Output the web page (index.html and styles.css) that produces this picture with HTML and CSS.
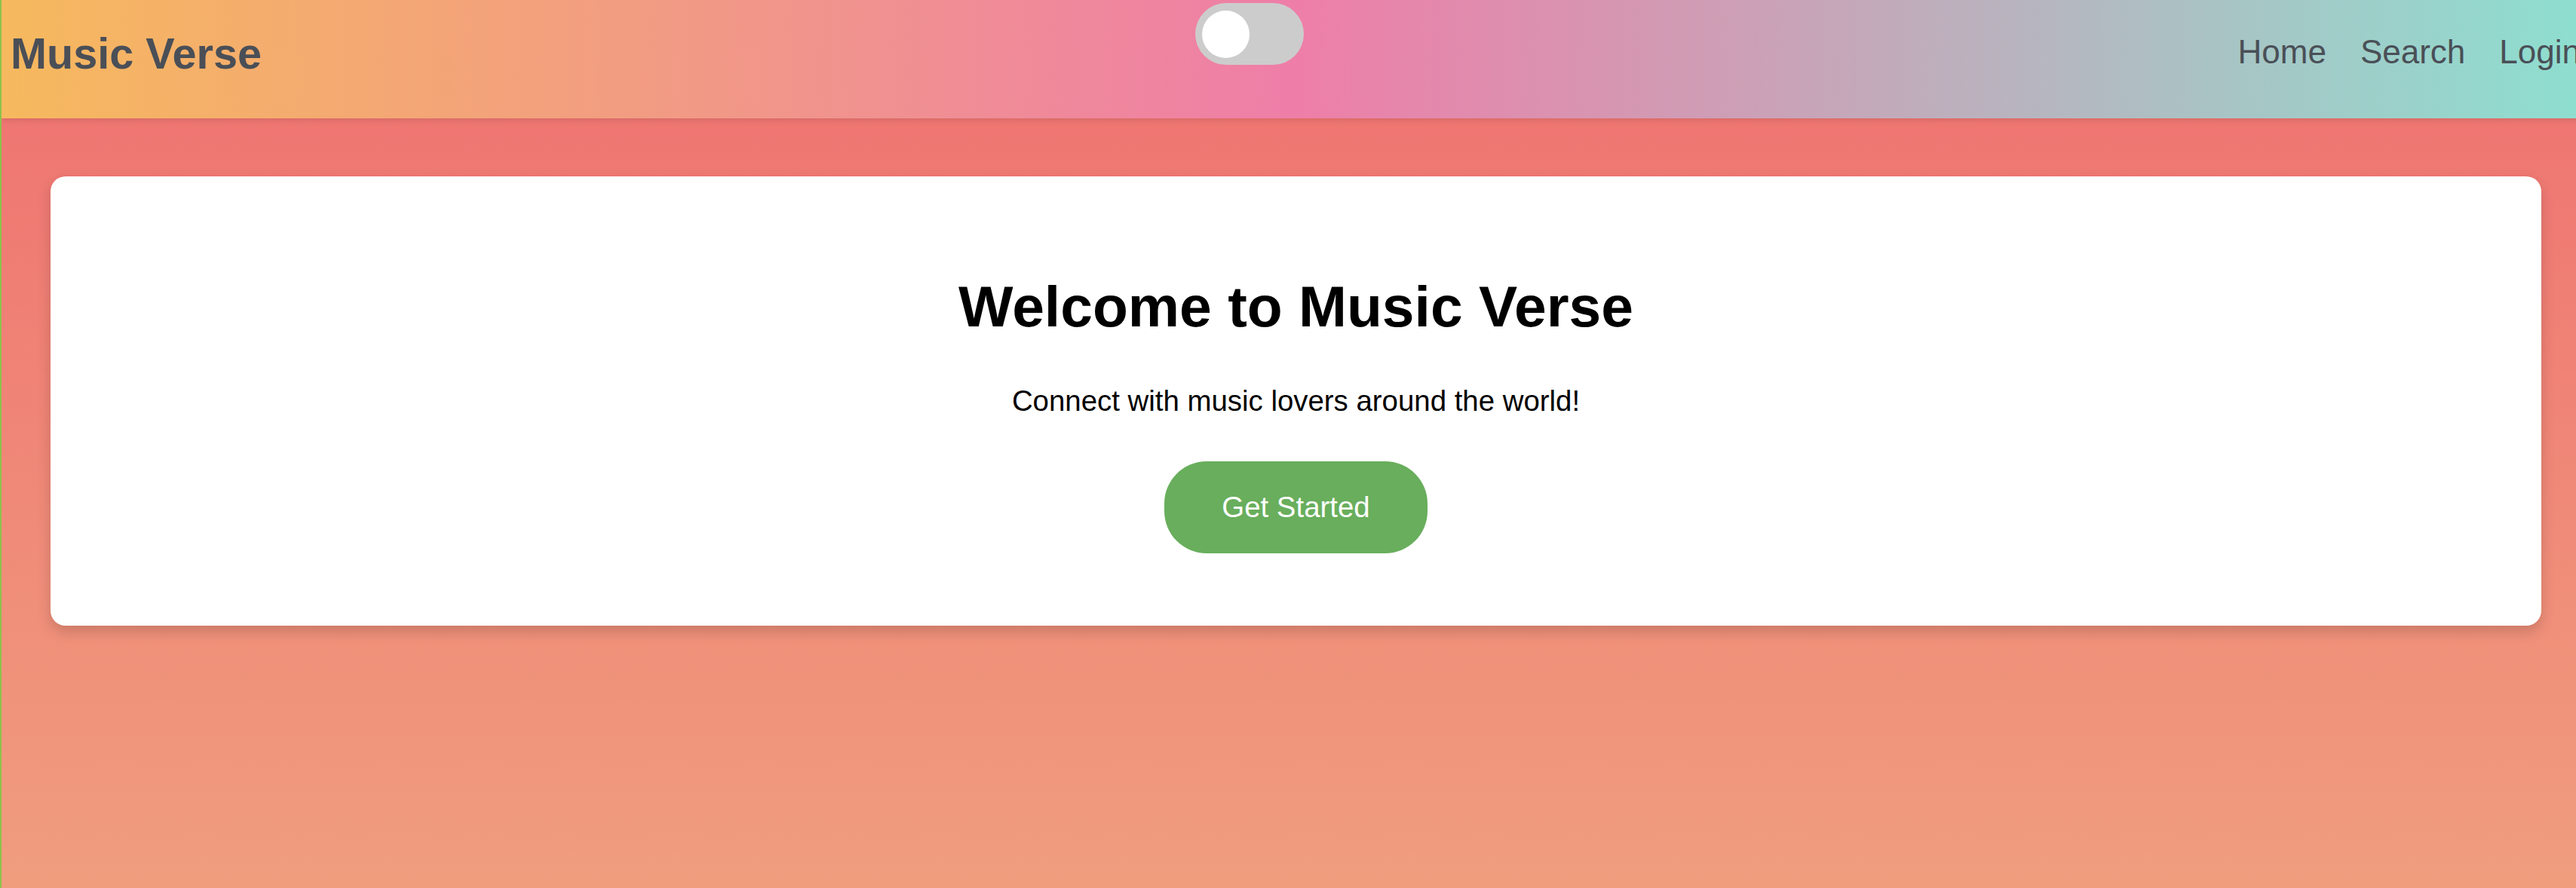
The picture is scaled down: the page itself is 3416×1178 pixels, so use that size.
FILE: index.html
```
<!DOCTYPE html>
<html lang="en">
<head>
<meta charset="utf-8">
<title>Music Verse</title>
<link rel="stylesheet" href="styles.css">
</head>
<body>
<header class="topbar">
  <div class="logo">Music Verse</div>
  <label class="toggle"><span class="knob"></span></label>
  <nav class="nav">
    <a href="#">Home</a>
    <a href="#">Search</a>
    <a href="#">Login</a>
  </nav>
</header>
<main class="main">
  <section class="card">
    <h1 class="title">Welcome to Music Verse</h1>
    <p class="lead">Connect with music lovers around the world!</p>
    <button class="cta">Get Started</button>
  </section>
</main>
</body>
</html>
```
FILE: styles.css
```
html, body {
  margin: 0;
  padding: 0;
}
body {
  overflow-x: hidden;
  min-height: 100vh;
  border-left: 2px solid #8bc34a;
  background: linear-gradient(180deg, #ef7070 0%, #f09d7e 100%);
  font-family: "Liberation Sans", Arial, Helvetica, sans-serif;
}
.topbar {
  box-sizing: content-box;
  width: calc(100% - 6px);
  height: 157px;
  padding: 0 10px 0 12px;
  display: flex;
  justify-content: space-between;
  align-items: flex-start;
  background: linear-gradient(90deg, #f6b95e 0%, #ee7ea8 50%, #8ddfd0 100%);
  box-shadow: 0 2px 8px rgba(0, 0, 0, 0.12);
  position: relative;
  z-index: 1;
}
.logo {
  margin-top: 38px;
  font-size: 57.6px;
  font-weight: bold;
  color: #4a4f57;
  line-height: normal;
}
.toggle {
  margin-top: 4px;
  width: 144px;
  height: 82px;
  border-radius: 41px;
  background: #cccccc;
  display: flex;
  align-items: center;
  padding-left: 9px;
  box-sizing: border-box;
}
.knob {
  width: 63px;
  height: 63px;
  border-radius: 50%;
  background: #ffffff;
}
.nav {
  margin-top: 44px;
  display: flex;
  gap: 45px;
}
.nav a {
  font-size: 44px;
  color: #4a4f57;
  text-decoration: none;
  line-height: normal;
}
.main {
  padding: 77px 46px 0 65px;
}
.card {
  background: #ffffff;
  border-radius: 20px;
  box-shadow: 0 8px 18px rgba(0, 0, 0, 0.16);
  padding: 128px 0 96px;
  text-align: center;
}
.title {
  margin: 0 0 59px;
  font-size: 76.8px;
  font-weight: bold;
  line-height: normal;
  color: #000;
}
.lead {
  margin: 0 0 58px;
  font-size: 38.4px;
  line-height: normal;
  color: #000;
}
.cta {
  font-family: inherit;
  font-size: 38.4px;
  line-height: normal;
  color: #ffffff;
  background: #68ae5c;
  border: none;
  border-radius: 56px;
  padding: 39px 76px;
}
```
